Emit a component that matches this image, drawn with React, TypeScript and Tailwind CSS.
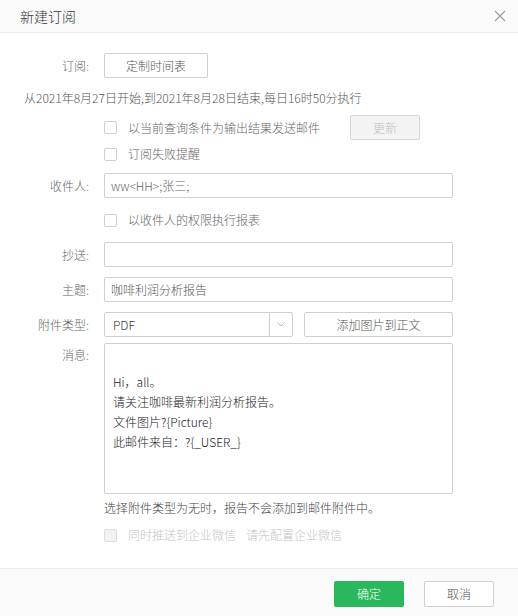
import React from "react";

const font = { fontFamily: '"Noto Sans CJK SC", sans-serif' };

function Label({ children }: { children: React.ReactNode }) {
  return <div className="w-[90px] shrink-0 pr-[1px] text-right text-[12px] text-[#666]">{children}</div>;
}

function Box({ disabled }: { disabled?: boolean }) {
  return (
    <span
      className={
        "inline-block h-[13px] w-[13px] shrink-0 rounded-[2px] border " +
        (disabled ? "border-[#dcdcdc] bg-[#f2f2f2]" : "border-[#d0d0d0] bg-white")
      }
    />
  );
}

export default function App() {
  return (
    <div className="flex h-[616px] w-[518px] flex-col bg-white font-light" style={font}>
      <div className="flex h-[33px] shrink-0 items-center justify-between border-b border-[#ebebeb] bg-[#fafafa] pl-[20px] pr-[6px]">
        <span className="text-[14px] text-[#333]">新建订阅</span>
        <svg width="12" height="12" viewBox="0 0 12 12" className="mr-[6px]">
          <path d="M1 1L11 11M11 1L1 11" stroke="#999" strokeWidth="1.1" fill="none" />
        </svg>
      </div>

      <div className="flex flex-1 flex-col">
        <div className="mt-[20px] flex h-[25px] items-center">
          <Label>订阅:</Label>
          <button className="ml-[14px] h-[25px] w-[104px] rounded-[2px] border border-[#d0d0d0] bg-white text-[12px] text-[#555]">
            定制时间表
          </button>
        </div>

        <div className="mt-[10px] flex h-[20px] items-center pl-[24px] text-[12px] text-[#555]">
          从2021年8月27日开始,到2021年8月28日结束,每日16时50分执行
        </div>

        <div className="mt-[7px] flex h-[25px] items-center pl-[104px]">
          <Box />
          <span className="ml-[11px] w-[222px] text-[12px] text-[#666]">以当前查询条件为输出结果发送邮件</span>
          <button className="ml-[0px] h-[25px] w-[70px] rounded-[2px] border border-[#d6d6d6] bg-[#f3f3f3] text-[12px] text-[#c0c0c0]">
            更新
          </button>
        </div>

        <div className="mt-[4px] flex h-[20px] items-center pl-[104px]">
          <Box />
          <span className="ml-[11px] text-[12px] text-[#666]">订阅失败提醒</span>
        </div>

        <div className="mt-[9px] flex h-[25px] items-center">
          <Label>收件人:</Label>
          <div className="ml-[14px] flex h-[25px] w-[349px] items-center rounded-[2px] border border-[#d0d0d0] px-[6px] text-[12px] text-[#666]">
            ww&lt;HH&gt;;张三;
          </div>
        </div>

        <div className="mt-[12px] flex h-[20px] items-center pl-[104px]">
          <Box />
          <span className="ml-[11px] text-[12px] text-[#666]">以收件人的权限执行报表</span>
        </div>

        <div className="mt-[12px] flex h-[25px] items-center">
          <Label>抄送:</Label>
          <div className="ml-[14px] h-[25px] w-[349px] rounded-[2px] border border-[#d0d0d0]" />
        </div>

        <div className="mt-[10px] flex h-[25px] items-center">
          <Label>主题:</Label>
          <div className="ml-[14px] flex h-[25px] w-[349px] items-center rounded-[2px] border border-[#d0d0d0] px-[6px] text-[12px] text-[#555]">
            咖啡利润分析报告
          </div>
        </div>

        <div className="mt-[10px] flex h-[25px] items-center">
          <Label>附件类型:</Label>
          <div className="ml-[14px] flex h-[25px] w-[189px] items-center rounded-[2px] border border-[#d0d0d0]">
            <span className="flex-1 pl-[8px] text-[12px] text-[#333]">PDF</span>
            <span className="flex h-full w-[23px] items-center justify-center border-l border-[#d0d0d0]">
              <svg width="8" height="5" viewBox="0 0 8 5">
                <path d="M0.5 0.5L4 4L7.5 0.5" stroke="#bbb" strokeWidth="1" fill="none" />
              </svg>
            </span>
          </div>
          <button className="ml-[11px] h-[25px] w-[149px] rounded-[2px] border border-[#d0d0d0] bg-white text-[12px] text-[#555]">
            添加图片到正文
          </button>
        </div>

        <div className="mt-[6px] flex items-start">
          <div className="pt-[3px]">
            <Label>消息:</Label>
          </div>
          <div className="ml-[14px] h-[151px] w-[349px] rounded-[2px] border border-[#d0d0d0] px-[8px] pt-[8px] text-[12px] leading-[20px] text-[#222]">
            <div>&nbsp;</div>
            <div>Hi，all。</div>
            <div>请关注咖啡最新利润分析报告。</div>
            <div>文件图片?{"{Picture}"}</div>
            <div>此邮件来自：?{"{_USER_}"}</div>
          </div>
        </div>

        <div className="mt-[4px] flex h-[20px] items-center pl-[104px] text-[12px] text-[#444]">
          选择附件类型为无时，报告不会添加到邮件附件中。
        </div>

        <div className="mt-[7px] flex h-[20px] items-center pl-[104px]">
          <Box disabled />
          <span className="ml-[11px] text-[12px] text-[#c4c4c4]">同时推送到企业微信</span>
          <span className="ml-[10px] text-[12px] text-[#c4c4c4]">请先配置企业微信</span>
        </div>
      </div>

      <div className="flex h-[48px] shrink-0 items-start justify-end gap-[20px] border-t border-[#ebebeb] bg-[#fafafa] pr-[24px] pt-[12px]">
        <button className="h-[26px] w-[70px] rounded-[2px] bg-[#2bb75b] text-[12px] text-white">确定</button>
        <button className="h-[26px] w-[70px] rounded-[2px] border border-[#cfcfcf] bg-white text-[12px] text-[#555]">取消</button>
      </div>
    </div>
  );
}
